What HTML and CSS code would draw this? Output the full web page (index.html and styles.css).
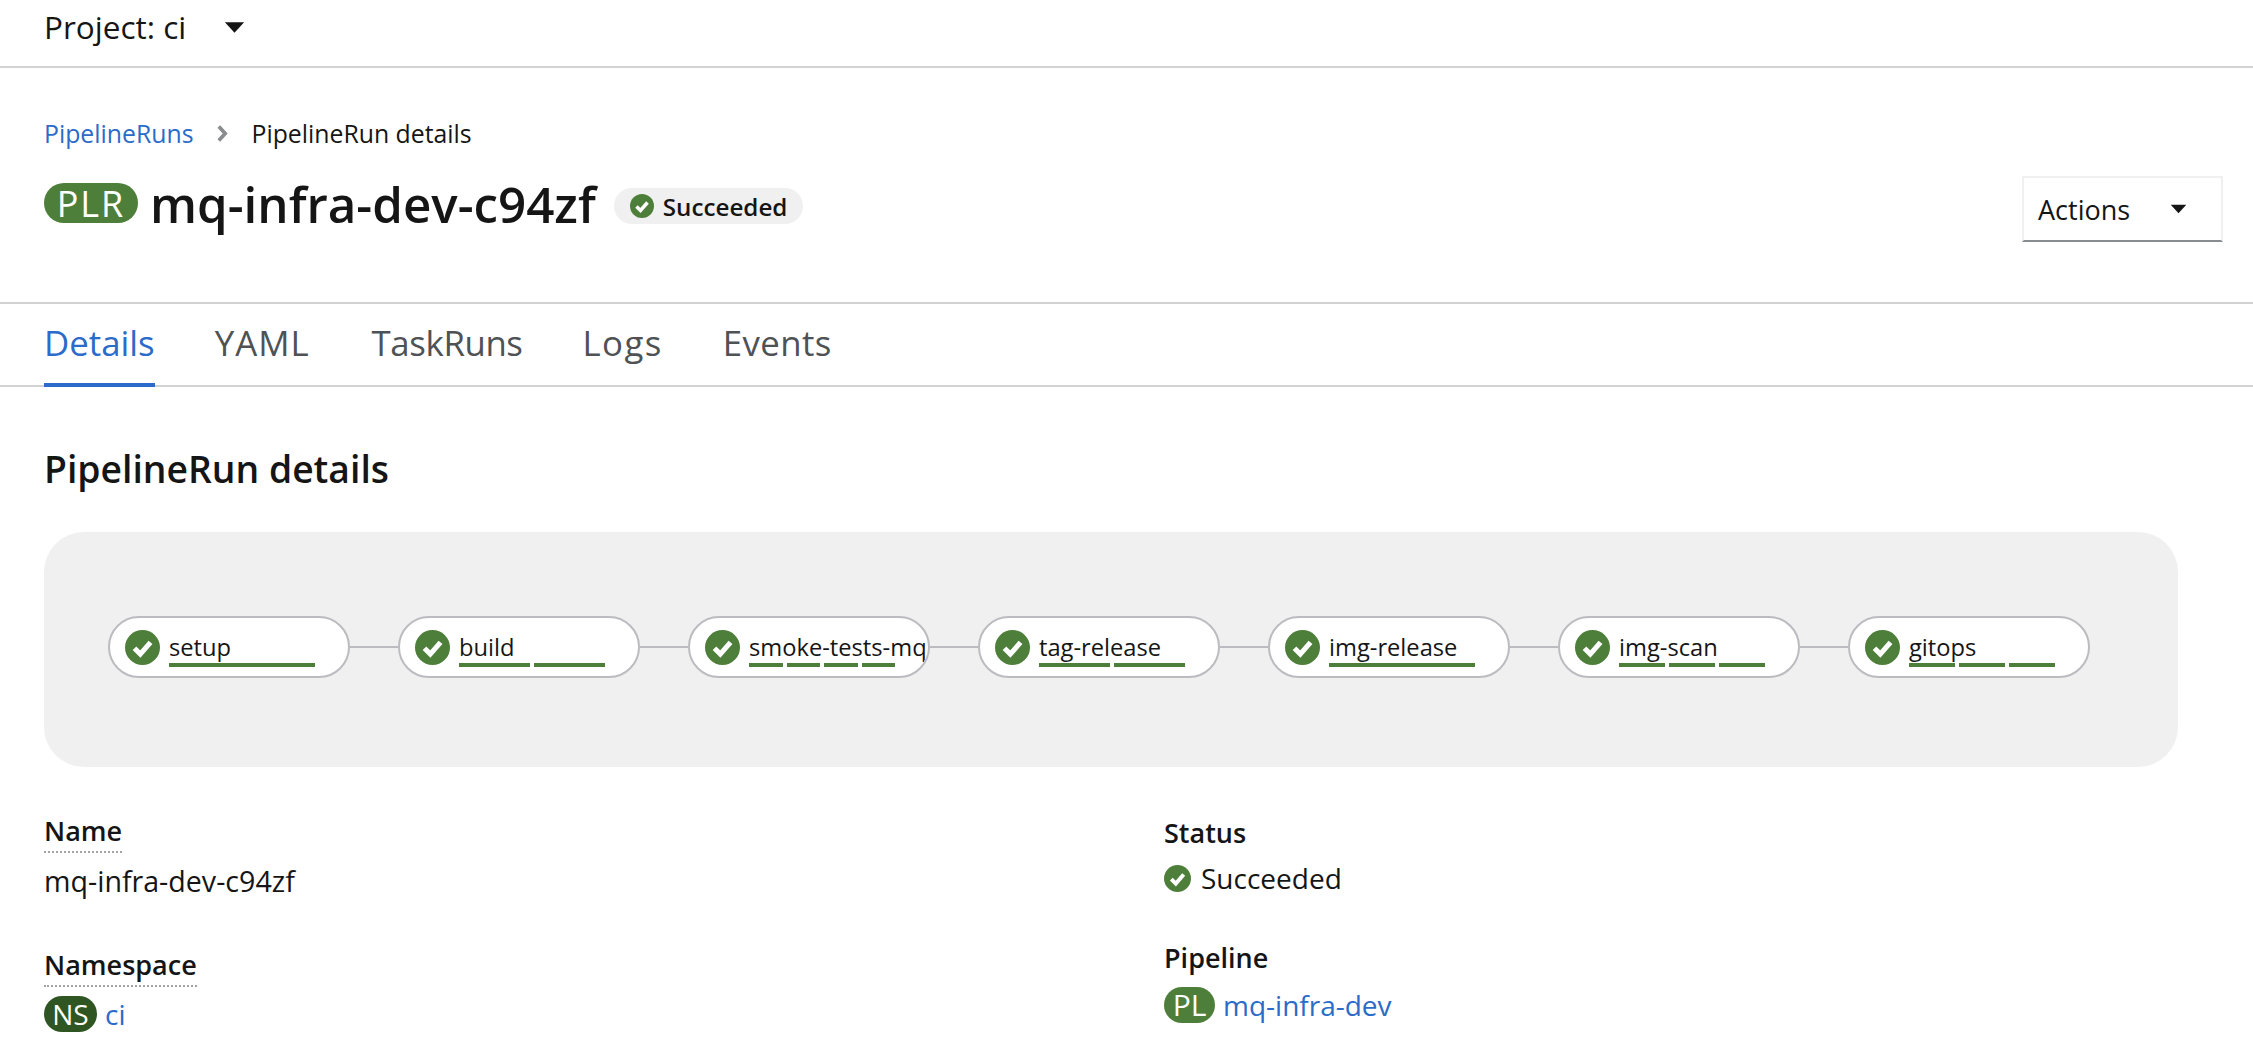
FILE: index.html
```html
<!DOCTYPE html>
<html lang="en">
<head>
<meta charset="utf-8">
<title>PipelineRun details</title>
<link rel="stylesheet" href="styles.css">
</head>
<body>
<div class="topbar">
  <span class="project">Project: ci</span>
  <svg class="caret" viewBox="0 0 24 14"><path d="M1 1h22L12 13z"/></svg>
</div>
<header class="head">
  <nav class="crumbs">
    <a class="link">PipelineRuns</a>
    <svg class="chev" viewBox="0 0 10 16"><path d="M2 1.5 8 8l-6 6.5" /></svg>
    <span>PipelineRun details</span>
  </nav>
  <div class="titlerow">
    <h1 class="title"><span class="badge badge-plr">PLR</span><span>mq-infra-dev-c94zf</span>
      <span class="pill"><svg class="ok ok-pill" viewBox="0 0 24 24"><circle cx="12" cy="12" r="12"/><path d="M6.5 12.5 10.5 16.5 17.5 8.5"/></svg>Succeeded</span>
    </h1>
    <button class="actions">Actions<svg class="caret caret-sm" viewBox="0 0 24 14"><path d="M1 1h22L12 13z"/></svg></button>
  </div>
</header>
<nav class="tabs">
  <a class="tab active">Details</a>
  <a class="tab tab-wide">YAML</a>
  <a class="tab tab-tight">TaskRuns</a>
  <a class="tab tab-wider">Logs</a>
  <a class="tab tab-last">Events</a>
</nav>
<main class="content">
  <h2 class="section">PipelineRun details</h2>
  <div class="graph">
    <div class="node"><svg class="ok ok-node" viewBox="0 0 24 24"><circle cx="12" cy="12" r="12"/><path d="M6.5 12.5 10.5 16.5 17.5 8.5"/></svg><div class="task"><span class="tname">setup</span><div class="bars"><i></i></div></div></div>
    <div class="line"></div>
    <div class="node"><svg class="ok ok-node" viewBox="0 0 24 24"><circle cx="12" cy="12" r="12"/><path d="M6.5 12.5 10.5 16.5 17.5 8.5"/></svg><div class="task"><span class="tname">build</span><div class="bars"><i></i><i></i></div></div></div>
    <div class="line"></div>
    <div class="node"><svg class="ok ok-node" viewBox="0 0 24 24"><circle cx="12" cy="12" r="12"/><path d="M6.5 12.5 10.5 16.5 17.5 8.5"/></svg><div class="task"><span class="tname">smoke-tests-mq</span><div class="bars"><i></i><i></i><i></i><i></i></div></div></div>
    <div class="line"></div>
    <div class="node"><svg class="ok ok-node" viewBox="0 0 24 24"><circle cx="12" cy="12" r="12"/><path d="M6.5 12.5 10.5 16.5 17.5 8.5"/></svg><div class="task"><span class="tname">tag-release</span><div class="bars"><i></i><i></i></div></div></div>
    <div class="line"></div>
    <div class="node"><svg class="ok ok-node" viewBox="0 0 24 24"><circle cx="12" cy="12" r="12"/><path d="M6.5 12.5 10.5 16.5 17.5 8.5"/></svg><div class="task"><span class="tname">img-release</span><div class="bars"><i></i></div></div></div>
    <div class="line"></div>
    <div class="node"><svg class="ok ok-node" viewBox="0 0 24 24"><circle cx="12" cy="12" r="12"/><path d="M6.5 12.5 10.5 16.5 17.5 8.5"/></svg><div class="task"><span class="tname">img-scan</span><div class="bars"><i></i><i></i><i></i></div></div></div>
    <div class="line"></div>
    <div class="node"><svg class="ok ok-node" viewBox="0 0 24 24"><circle cx="12" cy="12" r="12"/><path d="M6.5 12.5 10.5 16.5 17.5 8.5"/></svg><div class="task"><span class="tname">gitops</span><div class="bars"><i></i><i></i><i></i></div></div></div>
  </div>
  <div class="details">
    <dl class="col col-left">
      <dt><span class="dotted">Name</span></dt>
      <dd class="val-name">mq-infra-dev-c94zf</dd>
      <dt><span class="dotted">Namespace</span></dt>
      <dd class="val-res"><span class="badge badge-sm badge-ns">NS</span><a class="link">ci</a></dd>
    </dl>
    <dl class="col col-right">
      <dt>Status</dt>
      <dd class="val-status"><svg class="ok ok-status" viewBox="0 0 24 24"><circle cx="12" cy="12" r="12"/><path d="M6.5 12.5 10.5 16.5 17.5 8.5"/></svg>Succeeded</dd>
      <dt>Pipeline</dt>
      <dd class="val-res"><span class="badge badge-sm badge-pl">PL</span><a class="link">mq-infra-dev</a></dd>
    </dl>
  </div>
</main>
</body>
</html>
```
FILE: styles.css
```css
* { box-sizing: border-box; }
html, body { margin: 0; padding: 0; height: 100%; overflow: hidden; }
body { background: #fff; color: #151515; font-family: "Open Sans", "Noto Sans", sans-serif; font-size: 25px; }
.link { color: #2b6bc9; text-decoration: none; }

.topbar { height: 68px; border-bottom: 2px solid #d2d2d2; padding: 0 44px 12px; display: flex; align-items: center; gap: 38px; }
.project { font-size: 31.5px; line-height: 40px; }
.caret { width: 21px; height: 13px; fill: #151515; display: block; }

.head { height: 236px; border-bottom: 2px solid #d2d2d2; padding: 48px 30px 0 44px; }
.crumbs { display: flex; align-items: center; font-size: 24.8px; line-height: 34px; }
.chev { width: 14px; height: 17px; margin: 0 22px; fill: none; stroke: #8a8d90; stroke-width: 3.5; }
.titlerow { display: flex; justify-content: space-between; align-items: flex-start; margin-top: 23px; }
.title { margin: 0; display: flex; align-items: center; height: 60px; font-weight: 600; font-size: 49.3px; }
.badge { display: inline-flex; align-items: center; justify-content: center; color: #fff; border-radius: 20px; font-weight: 400; }
.badge-plr { width: 94px; height: 40px; font-size: 36px; letter-spacing: 2px; background: #4e7f3a; margin-right: 12px; }
.pill { display: inline-flex; align-items: center; height: 36px; margin: 6px 0 0 18px; padding: 0 16px; border-radius: 18px; background: #f0f0f0; font-size: 24.2px; font-weight: 600; }
.ok circle { fill: #4e7f3a; }
.ok path { fill: none; stroke: #fff; stroke-width: 3.5; }
.ok-pill { width: 24px; height: 24px; margin-right: 9px; }
.actions { width: 201px; height: 66px; margin-top: 3px; background: #fff; border: 2px solid #f0f0f0; border-bottom-color: #8a8d90; font: inherit; font-size: 27px; color: #151515; display: flex; align-items: center; justify-content: space-between; padding: 0 34px 0 14px; }
.caret-sm { width: 17px; height: 10px; }

.tabs { height: 83px; border-bottom: 2px solid #d2d2d2; display: flex; gap: 60px; padding: 0 44px; }
.tab { font-size: 34.8px; line-height: 78px; color: #4f5255; height: 83px; }
.tab.active { color: #2b6bc9; border-bottom: 4px solid #2b6bc9; }
.tab-wide { letter-spacing: 1px; margin-right: 2px; }
.tab-tight { letter-spacing: -.4px; }
.tab-wider { letter-spacing: 1.4px; }
.tab-last { letter-spacing: .4px; }

.content { padding: 0 44px; }
.section { margin: 0; padding-top: 59px; font-size: 37.3px; line-height: 46px; font-weight: 600; }
.graph { width: 2134px; height: 235px; margin-top: 40px; background: #f0f0f0; border-radius: 40px; display: flex; align-items: center; padding: 0 0 5px 64px; }
.node { width: 242px; height: 62px; flex: none; background: #fff; border: 2px solid #bbbbc0; border-radius: 31px; display: flex; align-items: center; padding-left: 15px; overflow: hidden; }
.ok-node { width: 35px; height: 35px; flex: none; margin-right: 9px; }
.task { width: 146px; flex: none; padding-top: 5px; }
.tname { display: block; font-size: 23.7px; line-height: 30px; white-space: nowrap; }
.bars { display: flex; gap: 4px; height: 4px; margin-top: 1px; }
.bars i { flex: 1; background: #4e7f3a; }
.line { width: 48px; height: 2px; flex: none; background: #bbbbc0; }

.details { display: flex; margin-top: 48px; }
.col { margin: 0; }
.col-left { width: 1120px; }
dt { font-size: 27px; font-weight: 600; line-height: 32px; }
dd { margin: 0; font-size: 28px; }
.col-right dt:first-child { margin-top: 2px; }
.dotted { border-bottom: 2px dotted #a0a2a5; padding-bottom: 4px; display: inline-block; }
.val-name { font-size: 28.6px; line-height: 36px; margin-top: 10px; margin-bottom: 50px; }
.val-status { display: flex; align-items: center; line-height: 36px; margin-top: 11px; margin-bottom: 46px; }
.ok-status { width: 27px; height: 27px; margin-right: 10px; }
.val-res { display: flex; align-items: center; line-height: 36px; }
.col-left .val-res { margin-top: 9px; }
.col-right .val-res { margin-top: 13px; }
.badge-sm { height: 36px; font-size: 30px; margin-right: 8px; }
.badge-ns { width: 53px; font-size: 28px; background: #2f5622; }
.badge-pl { width: 51px; background: #4e7f3a; }
```
